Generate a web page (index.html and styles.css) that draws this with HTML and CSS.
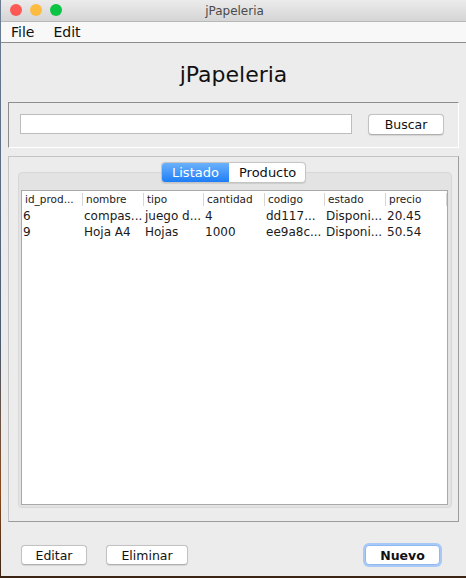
FILE: index.html
```html
<!DOCTYPE html>
<html>
<head>
<meta charset="utf-8">
<title>jPapeleria</title>
<link rel="stylesheet" href="styles.css">
</head>
<body>
<div class="window">
  <div class="titlebar">
    <div class="lights">
      <span class="light red"></span>
      <span class="light yellow"></span>
      <span class="light green"></span>
    </div>
    <div class="wtitle">jPapeleria</div>
  </div>
  <div class="menubar">
    <span class="menu">File</span>
    <span class="menu">Edit</span>
  </div>
  <div class="content">
    <h1 class="heading">jPapeleria</h1>
    <div class="search-panel">
      <input class="search-field" type="text">
      <button class="btn btn-buscar">Buscar</button>
    </div>
    <div class="tab-panel">
      <div class="tab-box">
        <div class="tabs">
          <span class="tab active">Listado</span>
          <span class="tab">Producto</span>
        </div>
        <div class="table">
          <div class="row header">
            <span class="cell">id_prod...</span>
            <span class="cell">nombre</span>
            <span class="cell">tipo</span>
            <span class="cell">cantidad</span>
            <span class="cell">codigo</span>
            <span class="cell">estado</span>
            <span class="cell">precio</span>
          </div>
          <div class="row">
            <span class="cell">6</span>
            <span class="cell">compas...</span>
            <span class="cell">juego d...</span>
            <span class="cell">4</span>
            <span class="cell">dd117...</span>
            <span class="cell">Disponi...</span>
            <span class="cell">20.45</span>
          </div>
          <div class="row">
            <span class="cell">9</span>
            <span class="cell">Hoja A4</span>
            <span class="cell">Hojas</span>
            <span class="cell">1000</span>
            <span class="cell">ee9a8c...</span>
            <span class="cell">Disponi...</span>
            <span class="cell">50.54</span>
          </div>
        </div>
      </div>
    </div>
    <div class="actions">
      <button class="btn btn-editar">Editar</button>
      <button class="btn btn-eliminar">Eliminar</button>
      <span class="spacer"></span>
      <button class="btn btn-nuevo">Nuevo</button>
    </div>
  </div>
</div>
</body>
</html>
```
FILE: styles.css
```css
html {
  background: linear-gradient(180deg, #6b7d94 0%, #4b5a6e 60%, #8a4a1c 85%, #3a2414 100%);
  height: 100%;
}
body {
  margin: 0;
  font-family: "DejaVu Sans", sans-serif;
  color: #1a1a1a;
}
.window {
  margin-left: 1px;
  width: 465px;
  height: 576px;
  background: #ececec;
  display: flex;
  flex-direction: column;
  overflow: hidden;
}
.titlebar {
  height: 21px;
  border-bottom: 1px solid #b8b8b8;
  background: linear-gradient(180deg, #ebebeb 0%, #d5d5d5 100%);
  position: relative;
  display: flex;
  align-items: center;
  justify-content: center;
}
.lights {
  position: absolute;
  left: 9px;
  top: 4px;
  display: flex;
  gap: 8px;
}
.light {
  width: 12px;
  height: 12px;
  border-radius: 50%;
  display: block;
}
.red { background: #fc5a55; }
.yellow { background: #fdbb3f; }
.green { background: #0cc444; }
.wtitle {
  font-size: 12px;
  color: #4a4a4a;
  margin-left: 2px;
}
.menubar {
  height: 20px;
  background: #f8f8f8;
  border-bottom: 1px solid #8c8c8c;
  display: flex;
  align-items: center;
  padding-left: 10px;
  gap: 19px;
  font-size: 14px;
  color: #111;
}
.content {
  flex: 1;
  display: flex;
  flex-direction: column;
}
.heading {
  margin: 20px 0 15px;
  font-weight: normal;
  font-size: 22px;
  line-height: 24px;
  text-align: center;
  color: #111;
}
.search-panel {
  margin: 0 7px;
  border: 1px solid #fff;
  border-top-color: #8e8e8e;
  border-left-color: #8e8e8e;
  display: flex;
  align-items: flex-start;
  padding: 11px 0 0 11px;
  box-sizing: border-box;
  height: 46px;
}
.search-field {
  width: 332px;
  height: 20px;
  box-sizing: border-box;
  border: 1px solid #bdbdbd;
  background: #fff;
  margin: 0;
  padding: 0;
}
.btn {
  font-family: "DejaVu Sans", sans-serif;
  font-size: 12.5px;
  color: #111;
  background: #fff;
  border: 1px solid #c2c2c2;
  border-bottom-color: #b0b0b0;
  border-radius: 4px;
  height: 21px;
  padding: 0;
  margin: 0;
  box-sizing: border-box;
  box-shadow: 0 0.5px 1px rgba(0,0,0,0.1);
}
.btn-buscar {
  width: 76px;
  margin-left: 16px;
}
.tab-panel {
  margin: 8px 7px 0;
  height: 366px;
  box-sizing: border-box;
  border: 1px solid #c4c4c4;
  border-right-color: #9c9c9c;
  border-bottom-color: #9c9c9c;
  padding: 15px 6px 13px 9px;
  display: flex;
}
.tab-box {
  flex: 1;
  position: relative;
  background: #e3e3e3;
  border: 1px solid #d8d8d8;
  border-radius: 4px;
  padding: 17px 3px 2px 2px;
  display: flex;
}
.tabs {
  position: absolute;
  top: -11px;
  left: 142px;
  display: flex;
  border: 1px solid #c4c4c4;
  border-radius: 4px;
  overflow: hidden;
  background: #fff;
  box-shadow: 0 0.5px 1px rgba(0,0,0,0.1);
}
.tab {
  font-size: 13px;
  height: 19px;
  line-height: 19px;
  padding: 0 9px 0 10px;
  color: #111;
}
.tab.active {
  background: linear-gradient(180deg, #6bb1fb 0%, #1e7ef6 100%);
  color: #fff;
  width: 48px;
}
.table {
  flex: 1;
  background: #fff;
  border: 1px solid #a9a9a9;
  box-sizing: border-box;
}
.row {
  display: grid;
  grid-template-columns: 61px 61px 60px 61px 60px 61px 61px;
  height: 16px;
  align-items: center;
  font-size: 12px;
}
.row .cell {
  padding-left: 1px;
  white-space: nowrap;
  overflow: hidden;
}
.row.header {
  height: 17px;
  font-size: 10.5px;
  color: #222;
}
.row.header .cell {
  padding-left: 3px;
  border-right: 1px solid #d6d6d6;
  line-height: 13px;
}
.actions {
  display: flex;
  align-items: center;
  padding: 23px 26px 0 20px;
  gap: 19px;
}
.spacer { flex: 1; }
.btn-editar { width: 66px; height: 20px; }
.btn-eliminar { width: 82px; height: 20px; }
.btn-nuevo {
  width: 75px;
  height: 20px;
  font-weight: bold;
  border: 1px solid #8fb9f3;
  box-shadow: 0 0 0 2px #a8c9f6;
}
```
